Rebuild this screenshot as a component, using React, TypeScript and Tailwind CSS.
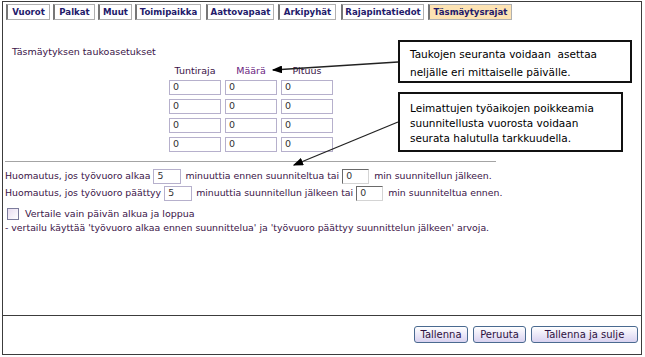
import React from 'react';

const tabs = [
  { label: 'Vuorot', cls: 'w-[44px] ml-[3px]' },
  { label: 'Palkat', cls: 'w-[42px] ml-[3px]' },
  { label: 'Muut', cls: 'w-[34px] ml-[3px]' },
  { label: 'Toimipaikka', cls: 'w-[66px] ml-[3px]' },
  { label: 'Aattovapaat', cls: 'w-[68px] ml-[5px]' },
  { label: 'Arkipyhät', cls: 'w-[58px] ml-[4px]' },
  { label: 'Rajapintatiedot', cls: 'w-[83px] ml-[5px]' },
  { label: 'Täsmäytysrajat', cls: 'w-[84px] ml-[4px]', active: true },
];

const rows = [0, 1, 2, 3];

const SmallInput = ({ value, cls }: { value: string; cls: string }) => (
  <span
    className={`inline-flex items-center h-[15px] px-[3px] border bg-white text-[#333] ${cls}`}
  >
    {value}
  </span>
);

const Btn = ({ label, w }: { label: string; w: string }) => (
  <button
    className={`h-[17px] ${w} rounded-[3px] border border-[#4a6a90] bg-gradient-to-b from-white to-[#d9d2f0] text-[10px] leading-none text-[#2c1040]`}
  >
    {label}
  </button>
);

export default function App() {
  return (
    <div className="relative w-[645px] h-[357px] bg-white pl-[2px] pt-[1px] pr-[3px] pb-[2px] font-['DejaVu_Sans',sans-serif] text-[9.5px] text-[#3a1347]">
      <div className="flex flex-col h-full border border-[#3c3c3c]">
        {/* tabs */}
        <div className="flex mt-[2px]">
          {tabs.map((t) => (
            <div
              key={t.label}
              className={`${t.cls} h-[16px] flex items-center justify-center border border-[#b0b0b0] border-l-[#777] border-l-2 font-bold text-[8.6px] text-[#231a6b] whitespace-nowrap ${
                t.active ? 'bg-[#fde3b3]' : 'bg-white'
              }`}
            >
              {t.label}
            </div>
          ))}
        </div>

        <div className="flex-1 flex flex-col">
          <div className="mt-[25px] pl-[9px] h-[14px] leading-[14px]">Täsmäytyksen taukoasetukset</div>

          <div className="ml-[166px] mt-[5px] flex flex-col">
            <div className="flex gap-[4px] h-[14px] leading-[14px]">
              <span className="w-[52px] text-center">Tuntiraja</span>
              <span className="w-[52px] text-center text-[#6a1c80]">Määrä</span>
              <span className="w-[52px] text-center">Pituus</span>
            </div>
            <div className="mt-[2px] flex flex-col gap-[4px]">
              {rows.map((r) => (
                <div key={r} className="flex gap-[4px]">
                  <SmallInput value="0" cls="w-[52px] border-[#b6b0cc]" />
                  <SmallInput value="0" cls="w-[52px] border-[#b6b0cc]" />
                  <SmallInput value="0" cls="w-[52px] border-[#b6b0cc]" />
                </div>
              ))}
            </div>
          </div>

          <div className="mt-[9px] ml-[2px] w-[491px] border-t border-[#a4a4a4]" />

          <div className="text-[9.35px]">
            <div className="mt-[6px] pl-[2px] flex items-center h-[16px] whitespace-nowrap">
              Huomautus, jos työvuoro alkaa
              <SmallInput value="5" cls="w-[28px] ml-[3px] mr-[4px] border-[#b6b0cc]" />
              minuuttia ennen suunniteltua tai
              <SmallInput value="0" cls="w-[27px] ml-[3px] mr-[5px] border-t-[#6a6a6a] border-l-[#6a6a6a] border-r-[#d4d4d4] border-b-[#d4d4d4]" />
              min suunnitellun jälkeen.
            </div>
            <div className="mt-[1px] pl-[2px] flex items-center h-[16px] whitespace-nowrap">
              Huomautus, jos työvuoro päättyy
              <SmallInput value="5" cls="w-[28px] ml-[3px] mr-[4px] border-[#b6b0cc]" />
              minuuttia suunnitellun jälkeen tai
              <SmallInput value="0" cls="w-[27px] ml-[3px] mr-[5px] border-t-[#6a6a6a] border-l-[#6a6a6a] border-r-[#d4d4d4] border-b-[#d4d4d4]" />
              min suunniteltua ennen.
            </div>

            <div className="mt-[6px] pl-[4px] flex items-center h-[14px] gap-[6px] text-[9.5px]">
              <span className="w-[12px] h-[12px] border border-[#7c7c9c] bg-gradient-to-br from-[#e8dcf0] to-white" />
              <span>Vertaile vain päivän alkua ja loppua</span>
            </div>
            <div className="pl-[2px] h-[13px] leading-[13px] whitespace-nowrap">
              - vertailu käyttää 'työvuoro alkaa ennen suunnittelua' ja 'työvuoro päättyy suunnittelun jälkeen' arvoja.
            </div>
          </div>
        </div>

        <div className="h-[39px] border-t border-[#3c3c3c] flex justify-end items-start pt-[10px] pr-[3px] gap-[5px]">
          <Btn label="Tallenna" w="w-[54px]" />
          <Btn label="Peruuta" w="w-[53px]" />
          <Btn label="Tallenna ja sulje" w="w-[107px]" />
        </div>
      </div>

      {/* callouts */}
      <div className="absolute left-[398px] top-[40px] w-[234px] h-[43px] border-2 border-[#111] bg-white pl-[10px] pt-[3px] font-['DejaVu_Sans',sans-serif] text-[10.5px] leading-[18px] text-black">
        <div>Taukojen seuranta voidaan&nbsp; asettaa</div>
        <div>neljälle eri mittaiselle päivälle.</div>
      </div>
      <div className="absolute left-[398px] top-[92px] w-[225px] h-[60px] border-2 border-[#111] bg-white pl-[10px] pt-[7px] font-['DejaVu_Sans',sans-serif] text-[10.5px] leading-[15px] text-black">
        <div>Leimattujen työaikojen poikkeamia</div>
        <div>suunnitellusta vuorosta voidaan</div>
        <div>seurata halutulla tarkkuudella.</div>
      </div>

      <svg className="absolute inset-0 pointer-events-none" width="645" height="357">
        <defs>
          <marker id="ah" markerWidth="8" markerHeight="6" refX="7" refY="3" orient="auto">
            <path d="M0,0 L8,3 L0,6 Z" fill="#000" />
          </marker>
        </defs>
        <line x1="398" y1="62" x2="273" y2="70" stroke="#222" strokeWidth="1.3" markerEnd="url(#ah)" />
        <line x1="398" y1="122" x2="294" y2="165" stroke="#222" strokeWidth="1.3" markerEnd="url(#ah)" />
      </svg>
    </div>
  );
}
